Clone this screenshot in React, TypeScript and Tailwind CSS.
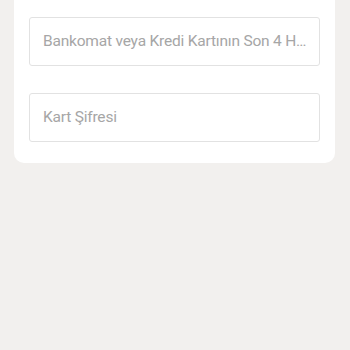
export default function App() {
  return (
    <div
      className="min-h-[350px] bg-[#f2f0ee] px-[14px] pr-[15px]"
      style={{ fontFamily: 'Roboto, "Noto Sans", sans-serif' }}
    >
      <div className="rounded-b-[10px] bg-white px-[15px] pt-[17px] pb-[21px] flex flex-col gap-[27px]">
        <div className="h-[49px] rounded-[3px] border border-[#e2e2e2] flex items-center pl-[13px] pr-[10px]">
          <span className="truncate text-[15.5px] tracking-[-0.2px] text-[#a6a6a6]">
            Bankomat veya Kredi Kartının Son 4 Hanesi
          </span>
        </div>
        <div className="h-[49px] rounded-[3px] border border-[#e2e2e2] flex items-center pl-[13px] pr-[10px]">
          <span className="truncate text-[15.5px] tracking-[-0.2px] text-[#a6a6a6]">Kart Şifresi</span>
        </div>
      </div>
    </div>
  );
}
